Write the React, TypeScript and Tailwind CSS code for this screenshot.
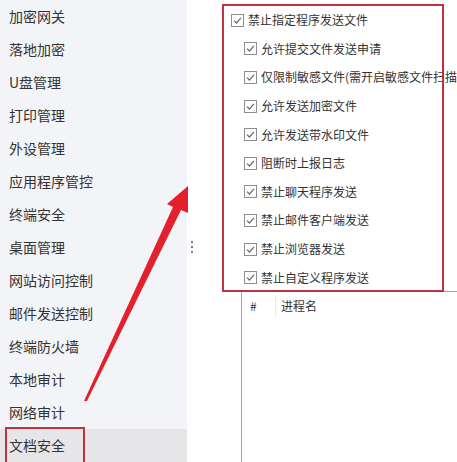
import React from "react";

const FONT = { fontFamily: '"Noto Sans CJK SC", "Noto Sans", sans-serif' };

const sideItems = [
  "加密网关",
  "落地加密",
  "U盘管理",
  "打印管理",
  "外设管理",
  "应用程序管控",
  "终端安全",
  "桌面管理",
  "网站访问控制",
  "邮件发送控制",
  "终端防火墙",
  "本地审计",
  "网络审计",
  "文档安全",
];

const subItems = [
  "允许提交文件发送申请",
  "仅限制敏感文件(需开启敏感文件扫描)",
  "允许发送加密文件",
  "允许发送带水印文件",
  "阻断时上报日志",
  "禁止聊天程序发送",
  "禁止邮件客户端发送",
  "禁止浏览器发送",
  "禁止自定义程序发送",
];

function Check() {
  return (
    <svg width="13" height="13" viewBox="0 0 13 13" className="shrink-0">
      <rect x="0.5" y="0.5" width="12" height="12" fill="#ffffff" stroke="#8e8e8e" />
      <path d="M3 6.6 L5.4 9 L10 3.8" fill="none" stroke="#6a6a6a" strokeWidth="1.2" />
    </svg>
  );
}

export default function App() {
  return (
    <div
      className="relative flex w-[457px] h-[462px] overflow-hidden bg-white text-[#333333]"
      style={FONT}
    >
      {/* Sidebar */}
      <div className="w-[187px] shrink-0 bg-[#f3f4f7] flex flex-col">
        {sideItems.map((t, i) => (
          <div
            key={t}
            className={
              i === sideItems.length - 1
                ? "h-[33px] shrink-0 flex items-center pl-[9px] text-[14px] bg-[#e6e6e8]"
                : "h-[33px] shrink-0 flex items-center pl-[9px] text-[14px]"
            }
          >
            {t}
          </div>
        ))}
      </div>

      {/* Main */}
      <div className="flex-1 flex flex-col min-w-0">
        <div className="pt-[6px] pl-[44px] flex flex-col text-[12px] whitespace-nowrap">
          <div className="h-[28.6px] flex items-center gap-[4px]">
            <Check />
            <span>禁止指定程序发送文件</span>
          </div>
          {subItems.map((t) => (
            <div key={t} className="h-[28.6px] flex items-center gap-[4px] pl-[13px]">
              <Check />
              <span>{t}</span>
            </div>
          ))}
        </div>
        <div className="ml-[54px] flex-1 border-l border-t border-[#a6a6a6] -mt-[1px]">
          <div className="flex h-[28px] items-center text-[12px]">
            <div className="w-[34px] h-[22px] flex items-center pl-[8px] border-r border-[#ececec]">#</div>
            <div className="pl-[5px]">进程名</div>
          </div>
        </div>
      </div>

      {/* splitter dots */}
      <div className="absolute left-[191px] top-[241px] flex flex-col gap-[3px]">
        <div className="w-[2px] h-[2px] bg-[#7a7a7a]" />
        <div className="w-[2px] h-[2px] bg-[#7a7a7a]" />
        <div className="w-[2px] h-[2px] bg-[#7a7a7a]" />
      </div>

      {/* annotations */}
      <div className="absolute left-[222px] top-[4px] w-[222px] h-[288px] border-2 border-[#c0313e]" />
      <div className="absolute left-[5px] top-[427px] w-[80px] h-[37px] border-2 border-[#c0313e]" />
      <svg className="absolute left-0 top-0" width="457" height="462" viewBox="0 0 457 462">
        <polygon
          points="84,401 173,207 167,204 188,186 188,213 181,210 87,401"
          fill="#e3202b"
        />
      </svg>
    </div>
  );
}
